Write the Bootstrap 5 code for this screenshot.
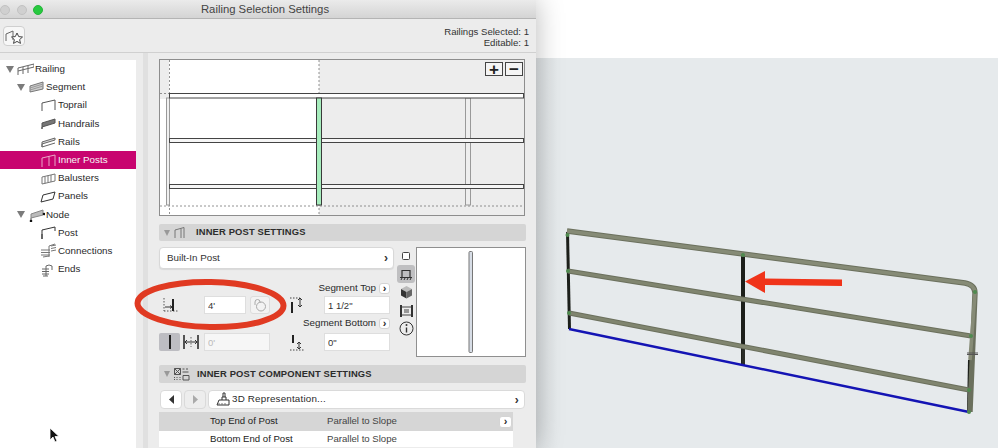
<!DOCTYPE html>
<html lang="en">
<head>
    <meta charset="UTF-8">
    <meta name="viewport" content="width=device-width, initial-scale=1.0">
    <title>Railing Selection Settings</title>
    <link href="https://cdn.jsdelivr.net/npm/bootstrap@5.3.2/dist/css/bootstrap.min.css" rel="stylesheet">
    <style>
        html, body { height: 448px; overflow: hidden; }
        body { font-family: "Liberation Sans", Arial, sans-serif; font-size: 9.5px; color: #2a2a2a; background: #fff; position: relative; }
        svg { display: block; flex: none; }

        .app-window { width: 536px; height: 448px; background: #ececec; box-shadow: 0 0 26px rgba(0,0,0,.28); position: relative; z-index: 1; flex: none; }
        .title-bar { height: 19px; background: linear-gradient(#ebebeb, #d4d4d4); border-bottom: 1px solid #b4b4b4; position: relative; }
        .title-text { font-size: 11.3px; line-height: 19px; color: #444; text-align: center; padding-right: 6px; }
        .lights { position: absolute; left: 0; top: 5px; gap: 6.5px; }
        .light { width: 10px; height: 10px; border-radius: 50%; background: #d0d0d0; border: 1px solid #c2c2c2; }
        .light-green { background: #27c93f; border-color: #24b53a; }
        .tool-bar { height: 34px; padding: 7px 7px 0 3px; border-bottom: 1px solid #d0d0d0; }
        .fav-btn { width: 22px; height: 20px; background: #f7f7f7; border: 1px solid #cfcfcf; border-radius: 4px; padding: 0; }
        .sel-info { font-size: 9.6px; line-height: 11px; text-align: right; color: #333; margin-top: 0; }

        .win-body { height: 395px; }
        .tree-pane { width: 136px; margin-top: 7px; background: #fff; padding-top: 0; flex: none; }
        .tree-list { --bs-list-group-bg: transparent; --bs-list-group-border-width: 0; --bs-list-group-color: #2a2a2a; }
        .tree-row { height: 18.2px; font-size: 9.8px; line-height: 18px; padding: 0; display: flex; align-items: center; background: transparent; color: #2a2a2a; gap: 1px; }
        .tree-row.active { background: #c8046f; color: #f5f5f5; margin: 0; }
        .depth-0 { padding-left: 6px; }
        .depth-1 { padding-left: 17px; }
        .depth-2 { padding-left: 40px; }
        .twist { width: 0; height: 0; border-left: 4px solid transparent; border-right: 4px solid transparent; border-top: 7px solid #7b7b7b; margin-right: 2px; flex: none; }
        .split-pane { width: 23px; flex: none; }
        .split-bar { width: 5px; height: 100%; margin-left: 7px; background: #e0e0e0; }
        .main-pane { width: 367px; flex: none; padding-top: 6px; position: relative; }

        .view-box { height: 157px; position: relative; }
        .zoom-btns { position: absolute; right: 3px; top: 3px; gap: 2px; }
        .zoom-btn { width: 18px; height: 14px; padding: 0; border: 1px solid #444; border-radius: 0; background: #f4f4f4; color: #222; font-size: 17px; line-height: 11px; font-weight: 700; }

        .sec-head { height: 17px; margin-top: 8px; background: #d5d5d5; border-radius: 2px; font-size: 9.4px; font-weight: 700; letter-spacing: .15px; color: #2c2c2c; padding-left: 5px; gap: 3px; }
        .sec-head-lower { height: 18px; margin-top: 9px; }
        .sec-twist { width: 0; height: 0; border-left: 3.5px solid transparent; border-right: 3.5px solid transparent; border-top: 6px solid #999; flex: none; }

        .post-panel { margin-top: 6px; height: 109px; }
        .post-left { width: 235px; flex: none; }
        .pick-btn { height: 22px; background: #fff; border: 1px solid #d8d8d8; border-radius: 4px; font-size: 9.8px; padding: 0 5px 0 7px; color: #333; box-shadow: 0 1px 1px rgba(0,0,0,.08); }
        .pick-chev { font-size: 12px; font-weight: 700; color: #333; }
        .post-grid { display: grid; grid-template-columns: 45px 42px 4px 20px 54px 66px; grid-template-rows: 15px 18px 19px 18px; margin-top: 12px; }
        .field-label { font-size: 9.8px; color: #2a2a2a; gap: 3px; white-space: nowrap; }
        .mini-chev { width: 11px; height: 11px; background: #fff; border: 1px solid #d4d4d4; border-radius: 3px; font-size: 11px; line-height: 8px; font-weight: 700; text-align: center; margin-right: 0; }
        .mini-chev-wide { width: 13px; height: 12px; margin-right: 1px; line-height: 9px; }
        .size-input.form-control { height: 18px; min-height: 0; padding: 0 3px; font-size: 9.5px; color: #333; background: #fff; border: 1px solid #dedede; border-radius: 0; }
        .size-input.form-control:disabled { background: #f6f6f6; color: #bbb; }
        .lock-btn { width: 20px; height: 18px; padding: 0; background: #f3f3f3; border: 1px solid #dcdcdc; border-radius: 3px; }
        .icon-cell { display: flex; align-items: center; justify-content: center; }
        .icon-start { justify-content: flex-start; padding-left: 2px; }
        .mode-on { width: 21px; height: 18px; background: #bdbdc2; border-radius: 2px; }
        .mode-off { width: 18px; height: 18px; margin-left: 2px; }
        .side-icons { width: 22px; flex: none; padding-top: 0; margin-left: 2px; }
        .side-slot { height: 18.2px; width: 18px; margin-left: 1px; }
        .side-slot.active { background: #bfbfc1; border-radius: 3px; }
        .mini-view { width: 110px; height: 110px; background: #fff; border: 1px solid #8f8f8f; flex: none; margin-left: -2px; }

        .nav-row { margin-top: 7px; height: 19px; gap: 2px; padding-left: 1px; padding-right: 1px; }
        .step-btn { width: 22px; height: 19px; padding: 0; background: #fff; border: 1px solid #dadada; border-radius: 4px; }
        .step-btn.is-off { background: #ededed; }
        .rep-btn { height: 19px; background: #fff; border: 1px solid #dadada; border-radius: 4px; font-size: 9.8px; letter-spacing: .2px; padding: 0 5px 0 6px; gap: 0; color: #2a2a2a; }
        .opt-table { margin-top: 3px; width: 354px; font-size: 9.6px; }
        .opt-row { height: 19px; padding-left: 51px; }
        .opt-row-sel { background: #d6d6d6; }
        .opt-row-plain { height: 16px; background: #fff; }
        .opt-name { width: 117px; color: #222; }
        .opt-val { color: #444; }
        .red-ring { position: absolute; left: 130px; top: 275px; z-index: 2; }
        .mouse-ptr { position: absolute; left: 49px; top: 427px; z-index: 3; }

        .right-area { min-width: 0; }
        .top-blank { height: 58px; background: #fff; }
        .model-view { background: linear-gradient(90deg, #dfe3e5, #e6eaec 22px); flex: 1 1 auto; }
    </style>
</head>
<body class="d-flex">
    <div class="app-window">
        <div class="title-bar">
            <div class="lights d-flex">
                <span class="light"></span><span class="light"></span><span class="light light-green"></span>
            </div>
            <div class="title-text">Railing Selection Settings</div>
        </div>
        <div class="tool-bar d-flex justify-content-between">
            <button class="fav-btn btn">
                <svg width="20" height="18" viewBox="0 0 20 18" fill="none"><path d="M2 7l7-3v9M2 7v7" stroke="#666"/><path d="M13 6l1.7 3.6 3.8.4-2.9 2.6.9 3.8-3.5-2-3.5 2 .9-3.8-2.9-2.6 3.8-.4z" fill="#fff" stroke="#444"/></svg>
            </button>
            <div class="sel-info">Railings Selected: 1<br>Editable: 1</div>
        </div>
        <div class="win-body d-flex">
            <div class="tree-pane">
                <div id="tree" class="list-group list-group-flush tree-list"></div>
            </div>
            <div class="split-pane"><div class="split-bar"></div></div>
            <div class="main-pane">
                <div class="view-box">
                    <svg width="367" height="157" viewBox="0 0 367 157">
                        <rect x=".5" y=".5" width="365" height="156" fill="#ededed" stroke="#8d8d8d"/>
                        <rect x="10" y="1" width="150" height="155" fill="#fff"/>
                        <rect x="1" y="40" width="9" height="116" fill="#fff"/>
                        <g stroke="#777" stroke-width=".8" stroke-dasharray="2 2" fill="none">
                            <path d="M10.5 1V156M160 1V156M1 147H365M1 34.5H10"/>
                        </g>
                        <rect x="7.5" y="39" width="3" height="107" fill="#f0f0f0" stroke="#999"/>
                        <rect x="306.5" y="39" width="5" height="107" fill="#eee" stroke="#999"/>
                        <rect x="10.5" y="34.5" width="354" height="4.5" fill="#fff" stroke="#444"/>
                        <rect x="10.5" y="79.5" width="354" height="4" fill="#f6f6f6" stroke="#444"/>
                        <rect x="10.5" y="125.5" width="354" height="4" fill="#f6f6f6" stroke="#444"/>
                        <rect x="157.5" y="39" width="5" height="107" fill="#a7edbd" stroke="#3a3a3a"/>
                    </svg>
                    <div class="zoom-btns d-flex">
                        <button class="zoom-btn btn">+</button>
                        <button class="zoom-btn btn">&minus;</button>
                    </div>
                </div>

                <div class="sec-head d-flex align-items-center">
                    <span class="sec-twist"></span>
                    <svg width="16" height="13" viewBox="0 0 16 13" fill="none"><path d="M2 12V4l9-2.5V12M8 2.5V12" stroke="#777"/></svg>
                    <span class="ms-1">INNER POST SETTINGS</span>
                </div>

                <div class="post-panel d-flex">
                    <div class="post-left">
                        <div class="pick-btn d-flex align-items-center justify-content-between">
                            <span>Built-In Post</span><span class="pick-chev">&rsaquo;</span>
                        </div>
                        <div class="post-grid">
                            <div class="field-label d-flex justify-content-end align-items-center" style="grid-column: 3 / 7;">Segment Top <span class="mini-chev">&rsaquo;</span></div>
                            <div class="icon-cell icon-start" style="grid-row: 2; grid-column: 1;">
                                <svg width="20" height="17" viewBox="0 0 20 17" fill="none"><path d="M3 1v13M3 14h15" stroke="#555" stroke-dasharray="1.5 1.5"/><path d="M12 2v12" stroke="#222" stroke-width="2"/><path d="M4 10h7M9 8.500l2 1.500-2 1.500" stroke="#333"/></svg>
                            </div>
                            <input class="form-control size-input" style="grid-row: 2; grid-column: 2;" value="4'" readonly>
                            <button class="lock-btn btn" style="grid-row: 2; grid-column: 4;">
                                <svg class="mx-auto" width="16" height="14" viewBox="0 0 16 14" fill="none"><circle cx="9" cy="8.500" r="4.500" stroke="#aaa"/><path d="M3 7V4a2.500 2.500 0 0 1 5 0v1" stroke="#aaa"/></svg>
                            </button>
                            <div class="icon-cell" style="grid-row: 2; grid-column: 5;">
                                <svg width="16" height="17" viewBox="0 0 16 17" fill="none"><path d="M1 1h10" stroke="#444" stroke-dasharray="1.5 1.5"/><path d="M3 5v11" stroke="#222" stroke-width="2"/><path d="M11 1v9M9 3l2-2 2 2M9 8l2 2 2-2" stroke="#333"/></svg>
                            </div>
                            <input class="form-control size-input" style="grid-row: 2; grid-column: 6;" value="1 1/2&quot;" readonly>

                            <div class="field-label d-flex justify-content-end align-items-center" style="grid-row: 3; grid-column: 3 / 7;">Segment Bottom <span class="mini-chev">&rsaquo;</span></div>

                            <div class="d-flex" style="grid-row: 4; grid-column: 1;">
                                <div class="mode-on icon-cell"><svg width="8" height="16" viewBox="0 0 8 16"><path d="M4 1v14" stroke="#222" stroke-width="2"/></svg></div>
                                <div class="mode-off icon-cell"><svg width="18" height="16" viewBox="0 0 18 16" fill="none"><path d="M2 1v14M16 1v14" stroke="#222" stroke-width="1.500"/><path d="M3 8h12M5 6l-2 2 2 2M13 6l2 2-2 2" stroke="#333"/><path d="M9 3v10" stroke="#666" stroke-dasharray="1.500 1.500"/></svg></div>
                            </div>
                            <input class="form-control size-input" style="grid-row: 4; grid-column: 2 / 5;" value="0'" disabled>
                            <div class="icon-cell" style="grid-row: 4; grid-column: 5;">
                                <svg width="16" height="17" viewBox="0 0 16 17" fill="none"><path d="M4 1v8" stroke="#222" stroke-width="2"/><path d="M10 8v7M8 10l2-2 2 2M8 13l2 2 2-2" stroke="#333"/><path d="M1 16h14" stroke="#444" stroke-dasharray="1.500 1.500"/></svg>
                            </div>
                            <input class="form-control size-input" style="grid-row: 4; grid-column: 6;" value="0&quot;" readonly>
                        </div>
                    </div>
                    <div class="side-icons">
                        <div class="side-slot icon-cell"><svg width="9" height="9" viewBox="0 0 9 9"><rect x=".5" y=".5" width="7" height="7" rx="1" fill="#fff" stroke="#444"/></svg></div>
                        <div class="side-slot icon-cell active"><svg width="14" height="13" viewBox="0 0 14 13" fill="none"><path d="M3 9V2.500h8V9M1 9.500h12" stroke="#333" stroke-width="1.200"/><path d="M2 12l1-2M5 12l1-2M8 12l1-2M11 12l1-2" stroke="#333"/></svg></div>
                        <div class="side-slot icon-cell"><svg width="13" height="14" viewBox="0 0 13 14"><path d="M6.500 1l5.500 3-5.500 3L1 4z" fill="#bbb"/><path d="M1 4l5.500 3v6.500L1 10.500z" fill="#333"/><path d="M12 4L6.500 7v6.500l5.500-3z" fill="#666"/></svg></div>
                        <div class="side-slot icon-cell"><svg width="15" height="14" viewBox="0 0 15 14" fill="none"><path d="M2 1v12M13 1v12" stroke="#333" stroke-width="2"/><path d="M3 3h9M3 11h9M5 6h5M5 8h5" stroke="#444"/></svg></div>
                        <div class="side-slot icon-cell"><svg width="15" height="15" viewBox="0 0 15 15" fill="none"><circle cx="7.500" cy="7.500" r="6.500" stroke="#333"/><path d="M7.500 6.500v5" stroke="#333" stroke-width="1.400"/><circle cx="7.500" cy="4" r="1" fill="#333"/></svg></div>
                    </div>
                    <div class="mini-view d-flex justify-content-center align-items-center">
                        <svg width="6" height="102" viewBox="0 0 6 102"><rect x="1" y=".5" width="3.500" height="101" rx="1" fill="#d7dde6" stroke="#777"/></svg>
                    </div>
                </div>

                <div class="sec-head sec-head-lower d-flex align-items-center">
                    <span class="sec-twist"></span>
                    <svg width="17" height="14" viewBox="0 0 17 14" fill="none"><path d="M1.500 1.500h6v6h-6zM1.500 1.500l6 6M7.500 1.500l-6 6" stroke="#555"/><path d="M9.500 2h2M13 2h2M9.500 5h6M10 8.500h6v4.500h-6z" stroke="#555"/><path d="M1.500 10v3M4 10v3M7 10v3" stroke="#555" stroke-dasharray="1 1"/></svg>
                    <span class="ms-1">INNER POST COMPONENT SETTINGS</span>
                </div>

                <div class="nav-row d-flex">
                    <button class="step-btn btn"><svg class="mx-auto" width="7" height="9" viewBox="0 0 7 9"><path d="M6 0v9L1 4.500z" fill="#333"/></svg></button>
                    <button class="step-btn is-off btn"><svg class="mx-auto" width="7" height="9" viewBox="0 0 7 9"><path d="M1 0v9l5-4.500z" fill="#aaa"/></svg></button>
                    <div class="rep-btn d-flex align-items-center flex-grow-1">
                        <svg width="17" height="15" viewBox="0 0 17 15" fill="none"><path d="M4 8h10v5H2zM7 8V5h4v3M8 5V1h2v4" stroke="#333"/><path d="M4 11v2M7 11v2M10 11v2" stroke="#777"/></svg>
                        <span>3D Representation...</span>
                        <span class="pick-chev ms-auto">&rsaquo;</span>
                    </div>
                </div>

                <div class="opt-table">
                    <div class="opt-row opt-row-sel d-flex align-items-center">
                        <span class="opt-name">Top End of Post</span><span class="opt-val">Parallel to Slope</span>
                        <span class="mini-chev mini-chev-wide ms-auto">&rsaquo;</span>
                    </div>
                    <div class="opt-row opt-row-plain d-flex align-items-center">
                        <span class="opt-name">Bottom End of Post</span><span class="opt-val">Parallel to Slope</span>
                    </div>
                </div>
            </div>
        </div>
    </div>

    <svg class="red-ring" width="165" height="60" viewBox="130 275 165 60" fill="none">
        <ellipse cx="210.500" cy="304.500" rx="73" ry="22.500" stroke="#e03a22" stroke-width="6" transform="rotate(1 211 304.500)"/>
    </svg>
    <svg class="mouse-ptr" width="12" height="16" viewBox="0 0 12 16">
        <path d="M1 1v12l3-3 2 5 2-1-2-4.500h4z" fill="#111" stroke="#fff" stroke-width=".8"/>
    </svg>

    <div class="right-area d-flex flex-column flex-grow-1">
        <div class="top-blank"></div>
        <div class="model-view">
            <svg width="462" height="390" viewBox="536 58 462 390" fill="none">
                <path d="M567.500 232l2 97" stroke="#1c1f1a" stroke-width="3"/>
                <path d="M743 255v110" stroke="#1c1f1a" stroke-width="4"/>
                <path d="M743.500 345v20" stroke="#2a2d28" stroke-width="3"/>
                <path d="M970 360l-1 52" stroke="#1c1f1a" stroke-width="4"/>
                <path d="M569 329L969 412" stroke="#1414b4" stroke-width="2.500"/>
                <path d="M568 271L971 336M569 313L969 390" stroke="#6b705d" stroke-width="5"/>
                <path d="M568 271L971 336M569 313L969 390" stroke="#80856f" stroke-width="3"/>
                <path d="M567 231L965 283Q975 285 975 293L970 412" stroke="#6b705d" stroke-width="5.400"/>
                <path d="M567 231L965 283Q975 285 975 293L970 360" stroke="#868b76" stroke-width="3.600"/>
                <g fill="#4f8a4f">
                    <circle cx="567.500" cy="235" r="2"/><circle cx="568" cy="271" r="2"/><circle cx="569" cy="313" r="2"/>
                    <circle cx="743" cy="255" r="2"/><circle cx="975" cy="292" r="2"/><circle cx="971" cy="336" r="2"/>
                    <circle cx="969" cy="390" r="2"/><circle cx="969" cy="412" r="2"/>
                </g>
                <path d="M967 353h11M967 354.500h11" stroke="#555"/>
                <path d="M842 279.500L765 278.500V271L745 281.500L765 293V285L842 286Z" fill="#f0341a"/>
            </svg>
        </div>
    </div>

    <script>
        const icons = {
            rail: '<path d="M1 13V6l16-4v3L1 9M6 12V5M11 11V4" stroke="#666"/>',
            seg: '<path d="M2 12V6l13-4v7z" fill="#ccc" stroke="#777"/><path d="M2 8l13-4M2 10l13-4" stroke="#999"/>',
            top: '<path d="M2 13V5l13-3v10" stroke="#555"/>',
            hand: '<path d="M2 13V7l13-4v4L2 11z" fill="#777" stroke="#555"/>',
            rails: '<path d="M2 13V8l13-4v2L2 10zM2 13l13-4" fill="#ddd" stroke="#666"/>',
            inner: '<path d="M2 14V5l13-3v11M9 3.500V13" stroke="#e8a8c8"/>',
            bal: '<path d="M2 6l13-3v7L2 13zM5 5.500v7M8 4.500v7M11 4v7" stroke="#777"/>',
            panel: '<path d="M3 6l12-3-2 7L1 13z" fill="#fff" stroke="#333"/>',
            node: '<path d="M3 13V7l12-4v5L3 11z" fill="#bbb" stroke="#888"/><circle cx="3" cy="14" r="1.300" fill="#111"/><circle cx="16" cy="7" r="1.300" fill="#111"/>',
            post: '<path d="M2 14V5l13-3v4M2 14V9" stroke="#333"/>',
            conn: '<path d="M1 7h9M1 9.500h9M1 12h9M3 14l6-1M9 14V3l6-2M11 3l5-1M11 5.500l5-1M11 8l5-1" stroke="#777"/>',
            ends: '<path d="M2 7h7M2 9.500h7M2 12h7M3 14h5M6 14V4q3-2 6 0v4" stroke="#666"/>'
        };

        const treeData = [
            { label: 'Railing', depth: 0, icon: 'rail', open: true },
            { label: 'Segment', depth: 1, icon: 'seg', open: true },
            { label: 'Toprail', depth: 2, icon: 'top' },
            { label: 'Handrails', depth: 2, icon: 'hand' },
            { label: 'Rails', depth: 2, icon: 'rails' },
            { label: 'Inner Posts', depth: 2, icon: 'inner', active: true },
            { label: 'Balusters', depth: 2, icon: 'bal' },
            { label: 'Panels', depth: 2, icon: 'panel' },
            { label: 'Node', depth: 1, icon: 'node', open: true },
            { label: 'Post', depth: 2, icon: 'post' },
            { label: 'Connections', depth: 2, icon: 'conn' },
            { label: 'Ends', depth: 2, icon: 'ends' }
        ];

        function createRow(item) {
            const row = document.createElement('div');
            row.className = `list-group-item tree-row depth-${item.depth}` + (item.active ? ' active' : '');
            const twist = item.open ? '<span class="twist"></span>' : '';
            row.innerHTML = `${twist}<svg width="17" height="15" viewBox="0 0 17 15" fill="none">${icons[item.icon]}</svg><span>${item.label}</span>`;
            return row;
        }

        const tree = document.getElementById('tree');
        treeData.forEach(item => tree.appendChild(createRow(item)));
    </script>
    <script src="https://cdn.jsdelivr.net/npm/bootstrap@5.3.2/dist/js/bootstrap.bundle.min.js"></script>
</body>
</html>
